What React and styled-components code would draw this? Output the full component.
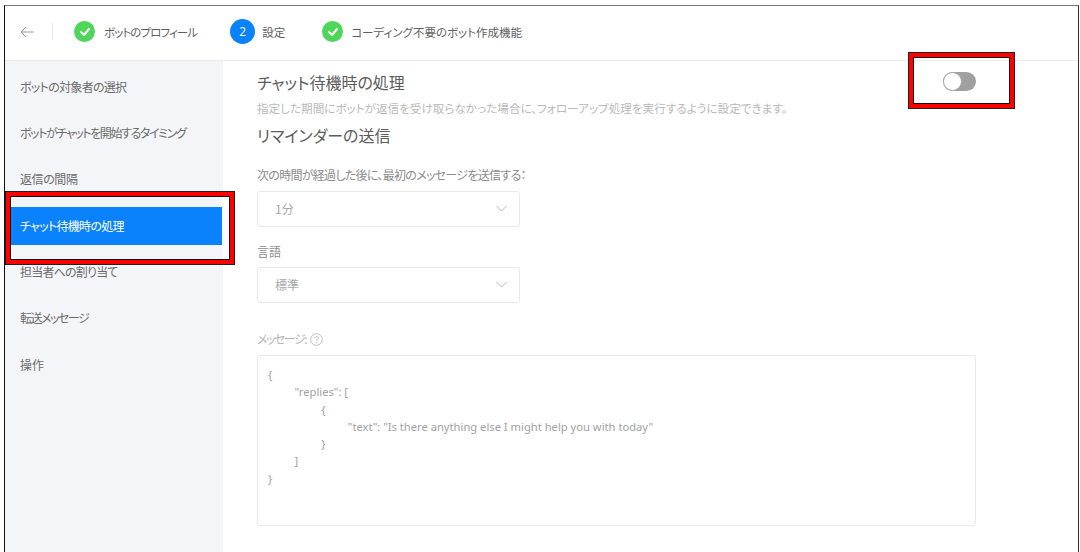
import React from "react";
import styled, { createGlobalStyle } from "styled-components";

const Global = createGlobalStyle`
  html, body { margin: 0; padding: 0; background: #fff; }
  body { font-family: "Noto Sans CJK JP", "Noto Sans", sans-serif; font-feature-settings: "palt"; }
  #root { width: 1080px; height: 552px; overflow: hidden; position: relative; }
`;

const Frame = styled.div`
  box-sizing: border-box;
  width: 1075px; height: 548px;
  margin: 5px 0 0 4px;
  border-left: 1px solid #111;
  border-right: 1px solid #333;
  border-top: 1px solid #777;
  display: flex; flex-direction: column;
  background: #fff;
`;
const Header = styled.header`
  box-sizing: border-box;
  height: 55px; flex: none;
  display: flex; align-items: center;
  padding: 0 0 3px 15px;
  border-bottom: 1px solid #ececec;
`;
const BackArrow = styled.svg`width: 14px; height: 12px; flex: none;`;
const Divider = styled.span`width: 1px; height: 17px; background: #e4e4e4; margin: 0 21px 0 18px; flex: none;`;
const Step = styled.div`display: flex; align-items: center; gap: ${p => p.$gap}px; margin-right: ${p => p.$mr}px;`;
const StepText = styled.span`font-size: 11.5px; color: #5f5f5f; white-space: nowrap; letter-spacing: ${p => p.$ls || 0}px;`;
const Badge = styled.span`
  width: ${p => p.$size}px; height: ${p => p.$size}px; border-radius: 50%;
  background: ${p => p.$bg}; color: #fff; font-size: 12px; font-family: "Open Sans", sans-serif;
  display: flex; align-items: center; justify-content: center; flex: none;
`;
const Body = styled.div`flex: 1; display: flex; min-height: 0;`;
const Side = styled.nav`
  width: 218px; flex: none; background: #f4f5f9;
  padding-top: 7px; box-sizing: border-box;
`;
const Item = styled.div`
  box-sizing: border-box;
  height: 38px; margin-bottom: 8.4px; padding: 0 0 2px 15px; margin-right: 1px;
  display: flex; align-items: center;
  font-size: 12px; white-space: nowrap;
  letter-spacing: ${p => p.$ls}px;
  color: ${p => p.$active ? "#fff" : "#6b6b6b"};
  background: ${p => p.$active ? "#0a82fb" : "transparent"};
`;
const Main = styled.main`flex: 1; padding: 9px 0 0 34px; position: relative; min-width: 0;`;
const H2 = styled.h2`margin: 0; font-size: 16px; font-weight: 400; color: #5c5c5c; line-height: 24px; white-space: nowrap;`;
const Desc = styled.p`margin: 6px 0 7px; font-size: 11.6px; color: #b9b9b9; line-height: 16px; white-space: nowrap;`;
const Label = styled.div`font-size: 12px; color: ${p => p.$c || "#8b8b8b"}; line-height: 16px; margin-top: ${p => p.$mt}px; white-space: nowrap; display: flex; align-items: center; gap: 4px; letter-spacing: ${p => p.$ls || 0}px;`;
const Select = styled.div`
  box-sizing: border-box; width: 263px; height: 36px; margin-top: ${p => p.$mt || 8}px;
  border: 1px solid #e9e9e9; border-radius: 3px;
  display: flex; align-items: center; justify-content: space-between;
  padding: 0 12px 2px 17px;
  font-size: 12px; color: #a8a8a8;
`;
const Chevron = styled.svg`width: 11px; height: 7px;`;
const Help = styled.svg`width: 13px; height: 13px;`;
const Code = styled.pre`
  box-sizing: border-box; width: 719px; height: 171px; margin: 8px 0 0;
  border: 1px solid #e9e9e9; border-radius: 3px;
  padding: 10px 10px;
  font-family: "Noto Sans", sans-serif; font-size: 11.2px; line-height: 17.3px; color: #a2a2a2;
  tab-size: 26.6px;
`;
const Toggle = styled.div`
  position: absolute; left: 943px; top: 72px;
  box-sizing: border-box; width: 33px; height: 19px;
  border-radius: 10px; background: #a0a0a0; 
`;
const Knob = styled.span`
  position: absolute; left: 0; top: 0; box-sizing: border-box;
  width: 19px; height: 19px; border-radius: 50%; background: #fff; border: 1px solid #a8a8a8;
`;
const Mark = styled.div`
  position: absolute; box-sizing: border-box;
  left: ${p => p.$x}px; top: ${p => p.$y}px; width: ${p => p.$w}px; height: ${p => p.$h}px;
  border: 1px solid #222;
  box-shadow: inset 0 0 0 4px #f00, inset 0 0 0 5px #111;
`;
const Wrap = styled.div`width: 100%; height: 100%;`;

const Check = ({ size }) => (
  <Badge $size={size} $bg="#4ed65a">
    <svg width="12" height="10" viewBox="0 0 12 10" fill="none" stroke="#fff" strokeWidth="2" strokeLinecap="round" strokeLinejoin="round">
      <path d="M2 5l3 3 5-6" />
    </svg>
  </Badge>
);

const menu = [
  { t: "ボットの対象者の選択", ls: -0.7 },
  { t: "ボットがチャットを開始するタイミング", ls: -1.4 },
  { t: "返信の間隔", ls: -0.4 },
  { t: "チャット待機時の処理", ls: -0.7 },
  { t: "担当者への割り当て", ls: -0.8 },
  { t: "転送メッセージ", ls: -1.5 },
  { t: "操作", ls: 0 },
];
const code = `{
\t"replies": [
\t\t{
\t\t\t"text": "Is there anything else I might help you with today"
\t\t}
\t]
}`;

export default function App() {
  return (
    <Wrap>
      <Global />
      <Frame>
        <Header>
          <BackArrow viewBox="0 0 14 12" fill="none" stroke="#9a9a9a" strokeWidth="1">
            <path d="M14 6H1M6 1L1 6l5 5" />
          </BackArrow>
          <Divider />
          <Step $gap={9} $mr={33}><Check size={21} /><StepText $ls={-0.9}>ボットのプロフィール</StepText></Step>
          <Step $gap={7} $mr={37}><Badge $size={25} $bg="#0a82fb">2</Badge><StepText>設定</StepText></Step>
          <Step $gap={8} $mr={0}><Check size={21} /><StepText>コーディング不要のボット作成機能</StepText></Step>
        </Header>
        <Body>
          <Side>
            {menu.map((m, i) => <Item key={m.t} $ls={m.ls} $active={i === 3}>{m.t}</Item>)}
          </Side>
          <Main>
            <H2>チャット待機時の処理</H2>
            <Desc>指定した期間にボットが返信を受け取らなかった場合に、フォローアップ処理を実行するように設定できます。</Desc>
            <H2>リマインダーの送信</H2>
            <Label $mt={20} $ls={-0.7}>次の時間が経過した後に、最初のメッセージを送信する：</Label>
            <Select>1分<Chevron viewBox="0 0 11 7" fill="none" stroke="#b5b5b5"><path d="M.5 1L5.5 6l5-5" /></Chevron></Select>
            <Label $mt={17}>言語</Label>
            <Select $mt={7}>標準<Chevron viewBox="0 0 11 7" fill="none" stroke="#b5b5b5"><path d="M.5 1L5.5 6l5-5" /></Chevron></Select>
            <Label $mt={28} $c="#b5b5b5" $ls={-1.5}>メッセージ:
              <Help viewBox="0 0 13 13" fill="none" stroke="#bdbdbd"><circle cx="6.5" cy="6.5" r="5.8" /><path d="M4.8 5.2c0-2.2 3.5-2.2 3.5 0 0 1.3-1.8 1.3-1.8 2.6M6.5 9.2v1" /></Help>
            </Label>
            <Code>{code}</Code>
          </Main>
        </Body>
      </Frame>
      <Toggle><Knob /></Toggle>
      <Mark $x={5} $y={191} $w={230} $h={74} />
      <Mark $x={908} $y={52} $w={107} $h={57} />
    </Wrap>
  );
}
